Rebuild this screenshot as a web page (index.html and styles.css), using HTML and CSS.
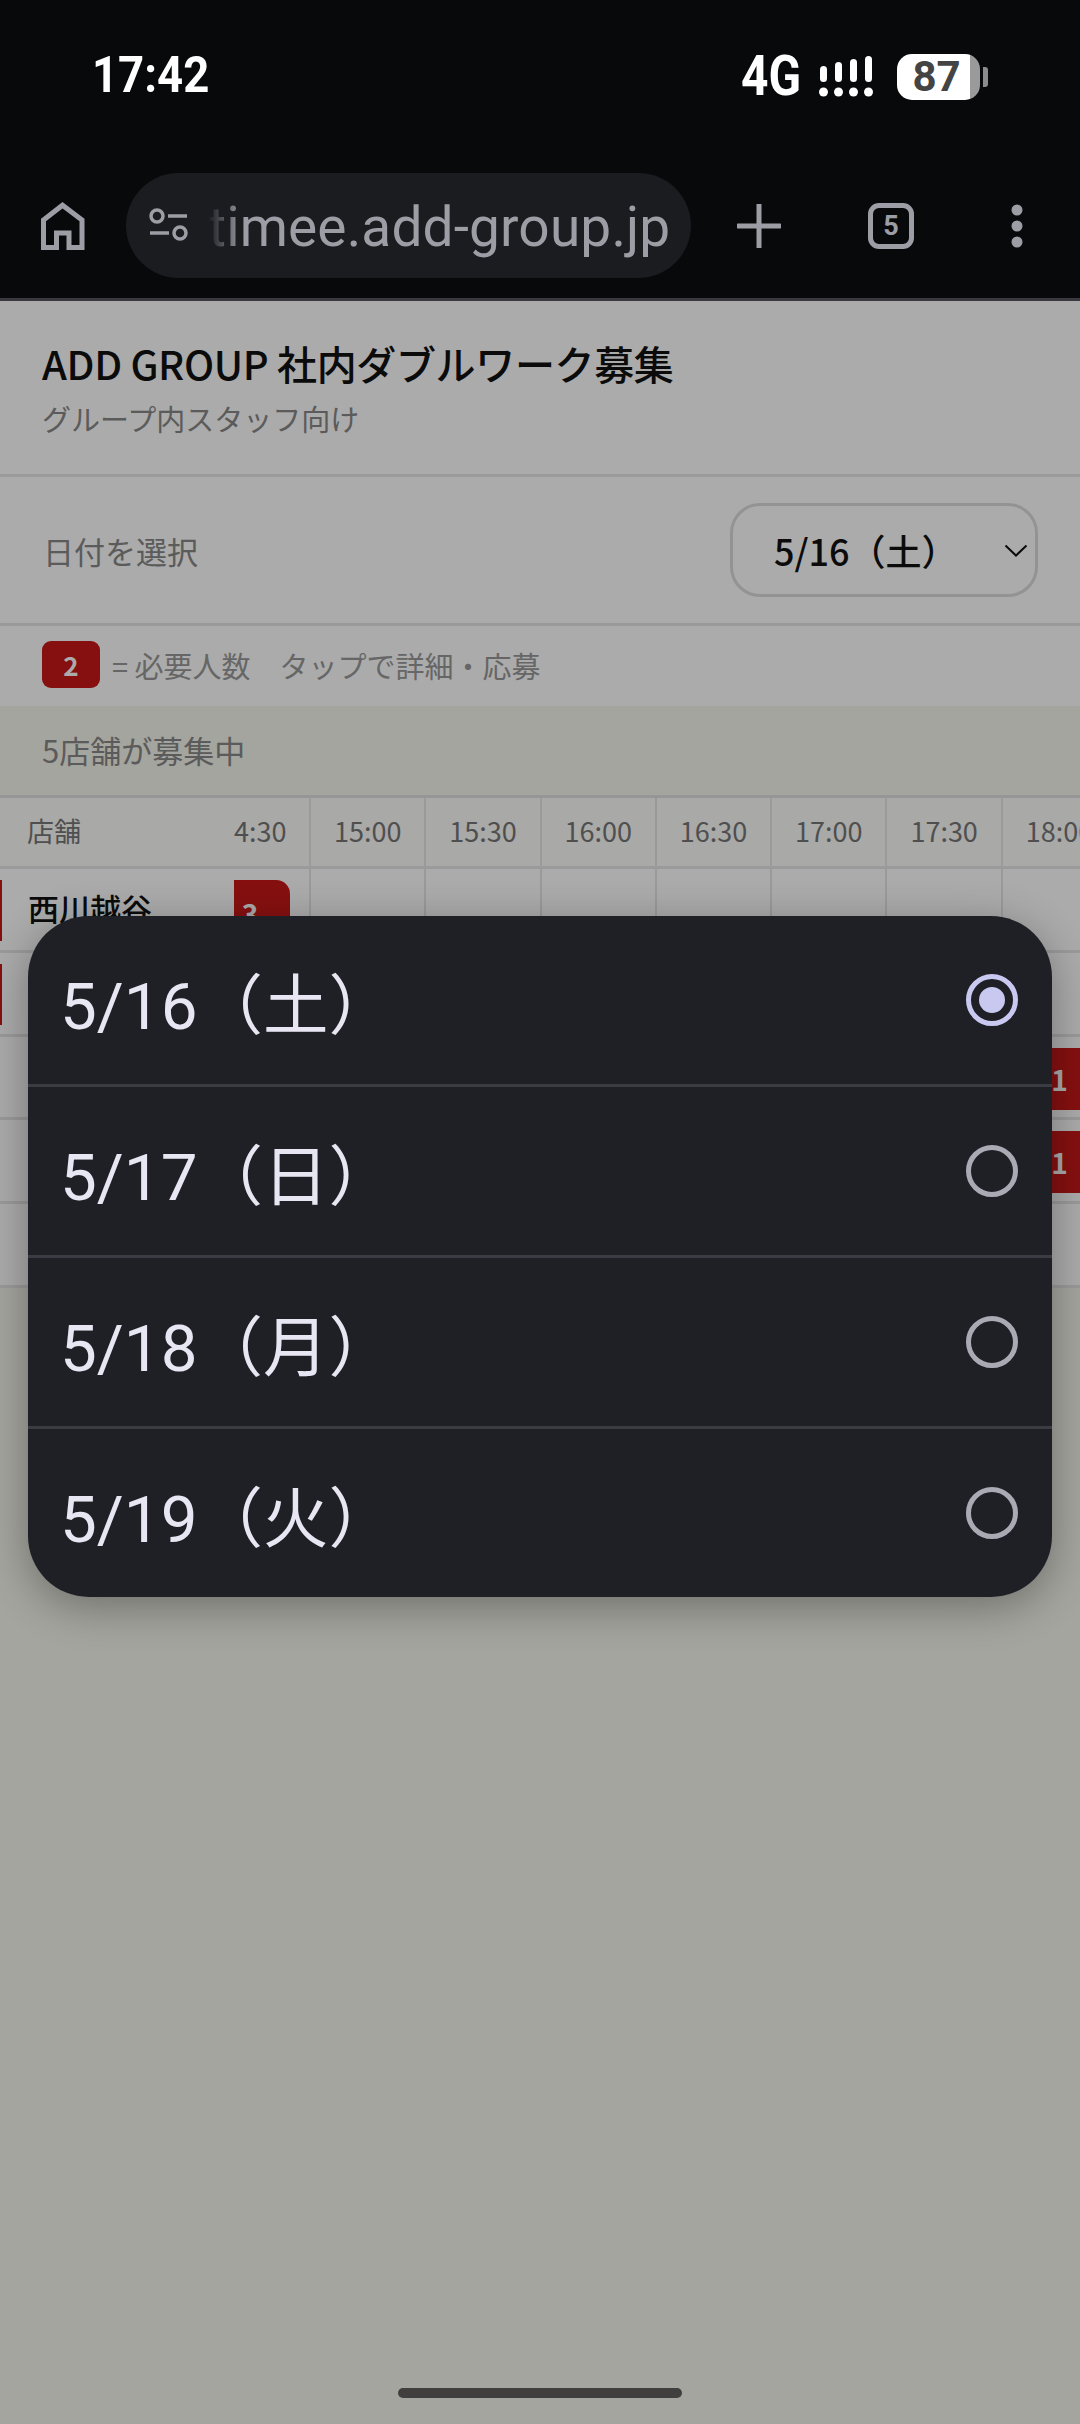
FILE: index.html
```html
<!DOCTYPE html>
<html lang="ja">
<head>
    <meta charset="UTF-8">
    <meta name="viewport" content="width=device-width, initial-scale=1.0">
    <title>ADD GROUP 社内ダブルワーク募集</title>
    <link rel="stylesheet" href="styles.css">
</head>
<body>
    <div class="chrome">
        <div class="status">
            <span class="time">17:42</span>
            <div class="status-right">
                <span class="net">4G</span>
                <svg class="signal" width="60" height="46" viewBox="0 0 60 46">
                    <g fill="#fff">
                        <rect x="2" y="11" width="7" height="16" rx="3.5"/>
                        <rect x="17" y="7" width="7" height="20" rx="3.5"/>
                        <rect x="32" y="4" width="7" height="23" rx="3.5"/>
                        <rect x="47" y="1" width="7" height="26" rx="3.5"/>
                        <circle cx="5.5" cy="37" r="4.5"/>
                        <circle cx="20.5" cy="37" r="4.5"/>
                        <circle cx="35.5" cy="37" r="4.5"/>
                        <circle cx="50.5" cy="37" r="4.5"/>
                    </g>
                </svg>
                <div class="battery"><span class="battery-level">87</span></div>
                <div class="battery-nub"></div>
            </div>
        </div>
        <div class="toolbar">
            <svg class="home-icon" width="44" height="48" viewBox="0 0 44 48">
                <path d="M2.5 45.5V18L21.500 3.200L41 18V45.500H28V31H15.500V45.500Z" fill="none" stroke="#9d9da5" stroke-width="5"/>
            </svg>
            <div class="url-bar">
                <svg class="tune-icon" width="42" height="36" viewBox="0 0 42 36">
                    <g fill="none" stroke="#9d9da5" stroke-width="3.500">
                        <circle cx="8" cy="8" r="6"/>
                        <circle cx="31" cy="25" r="6"/>
                        <path d="M19 8H38M1 25H20"/>
                    </g>
                </svg>
                <span class="url-text">timee.add-group.jp</span>
            </div>
            <svg class="plus-icon" width="44" height="44" viewBox="0 0 44 44">
                <path d="M22 1V43M1 22H43" stroke="#9d9da5" stroke-width="5" stroke-linecap="round"/>
            </svg>
            <div class="tab-count">5</div>
            <svg class="menu-icon" width="12" height="44" viewBox="0 0 12 44">
                <g fill="#9d9da5">
                    <circle cx="6" cy="6" r="5.500"/>
                    <circle cx="6" cy="22" r="5.500"/>
                    <circle cx="6" cy="38" r="5.500"/>
                </g>
            </svg>
        </div>
    </div>

    <div class="page">
        <div class="page-head">
            <h1>ADD GROUP 社内ダブルワーク募集</h1>
            <p>グループ内スタッフ向け</p>
        </div>
        <div class="date-row">
            <span class="date-label">日付を選択</span>
            <div class="date-select">
                <span>5/16（土）</span>
                <svg width="24" height="13" viewBox="0 0 24 13">
                    <path d="M1.500 1.500L12 11.500L22.500 1.500" fill="none" stroke="#111" stroke-width="2"/>
                </svg>
            </div>
        </div>
        <div class="legend">
            <span class="legend-badge">2</span>
            <span>= 必要人数　タップで詳細・応募</span>
        </div>
        <div class="count-row">5店舗が募集中</div>

        <div class="table">
            <div class="row head">
                <div class="store">店舗</div>
                <div class="cell first">4:30</div>
                <div class="cell">15:00</div>
                <div class="cell">15:30</div>
                <div class="cell">16:00</div>
                <div class="cell">16:30</div>
                <div class="cell">17:00</div>
                <div class="cell">17:30</div>
                <div class="cell">18:00</div>
            </div>
            <div class="row">
                <div class="store"><div class="store-name">西川越谷</div></div>
                <div class="cell first"><div class="slot slot-start">3</div></div>
                <div class="cell"></div><div class="cell"></div><div class="cell"></div>
                <div class="cell"></div><div class="cell"></div><div class="cell"></div>
                <div class="cell"></div>
            </div>
            <div class="row">
                <div class="store"><div class="store-name"></div></div>
                <div class="cell first"></div>
                <div class="cell"></div><div class="cell"></div><div class="cell"></div>
                <div class="cell"></div><div class="cell"></div><div class="cell"></div>
                <div class="cell"></div>
            </div>
            <div class="row">
                <div class="store"></div>
                <div class="cell first"></div>
                <div class="cell"></div><div class="cell"></div><div class="cell"></div>
                <div class="cell"></div><div class="cell"></div><div class="cell"></div>
                <div class="cell"><div class="slot">1</div></div>
            </div>
            <div class="row">
                <div class="store"></div>
                <div class="cell first"></div>
                <div class="cell"></div><div class="cell"></div><div class="cell"></div>
                <div class="cell"></div><div class="cell"></div><div class="cell"></div>
                <div class="cell"><div class="slot">1</div></div>
            </div>
            <div class="row">
                <div class="store"></div>
                <div class="cell first"></div>
                <div class="cell"></div><div class="cell"></div><div class="cell"></div>
                <div class="cell"></div><div class="cell"></div><div class="cell"></div>
                <div class="cell"></div>
            </div>
        </div>

        <div class="scrim"></div>

        <div class="sheet">
            <div class="option">
                <span>5/16（土）</span>
                <span class="radio selected"></span>
            </div>
            <div class="option">
                <span>5/17（日）</span>
                <span class="radio"></span>
            </div>
            <div class="option">
                <span>5/18（月）</span>
                <span class="radio"></span>
            </div>
            <div class="option">
                <span>5/19（火）</span>
                <span class="radio"></span>
            </div>
        </div>

        <div class="home-bar"></div>
    </div>
</body>
</html>
```

FILE: styles.css
```css
* { box-sizing: border-box; }
html, body {
    margin: 0;
    padding: 0;
    width: 1080px;
    height: 2424px;
    overflow: hidden;
}
body {
    display: flex;
    flex-direction: column;
    font-family: "Noto Sans CJK JP", "Noto Sans", sans-serif;
    background-color: #f6f6ed;
}

/* browser chrome */
.chrome {
    height: 301px;
    flex-shrink: 0;
    background-color: #08090b;
    border-bottom: 3px solid #38383e;
    font-family: Roboto, sans-serif;
}
.status {
    height: 173px;
    padding: 46px 92px 0 92px;
    display: flex;
    justify-content: space-between;
    align-items: flex-start;
    color: #fff;
}
.time {
    font-size: 50px;
    font-weight: 700;
    line-height: 58px;
    transform: scaleX(0.91);
    transform-origin: left center;
}
.status-right {
    display: flex;
    align-items: center;
    height: 60px;
}
.net {
    font-size: 55px;
    font-weight: 700;
    line-height: 60px;
    width: 77px;
    transform: scaleX(0.87);
    transform-origin: left center;
}
.signal { margin-top: 3px; width: 60px; }
.battery {
    width: 83px;
    height: 46px;
    margin-left: 19px;
    margin-top: 2px;
    border-radius: 15px;
    background: linear-gradient(to right, #fff 73px, #9a9a9a 73px);
    color: #444;
    font-weight: 700;
    font-size: 42px;
    line-height: 46px;
}
.battery-level { display: block; width: 79px; text-align: center; }
.battery-nub {
    width: 5px;
    height: 20px;
    margin-left: 3px;
    margin-top: 2px;
    background-color: #8c8c8c;
    border-radius: 0 3px 3px 0;
}
.toolbar {
    height: 105px;
    display: flex;
    align-items: center;
    position: relative;
}
.home-icon { margin-left: 41px; flex-shrink: 0; }
.url-bar {
    width: 565px;
    height: 105px;
    margin-left: 41px;
    padding-left: 23px;
    border-radius: 53px;
    background-color: #1b1c20;
    display: flex;
    align-items: center;
    overflow: hidden;
}
.tune-icon { flex-shrink: 0; }
.url-text {
    margin-left: 17px;
    margin-top: 2px;
    font-size: 55px;
    letter-spacing: 0.15px;
    color: #9d9da5;
    white-space: nowrap;
    -webkit-mask-image: linear-gradient(to right, transparent 0, #000 34px);
    mask-image: linear-gradient(to right, transparent 0, #000 34px);
}
.plus-icon { margin-left: 46px; flex-shrink: 0; }
.tab-count {
    width: 46px;
    height: 46px;
    margin-left: 87px;
    border: 5px solid #9d9da5;
    border-radius: 11px;
    color: #9d9da5;
    font-size: 27px;
    font-weight: 700;
    line-height: 36px;
    text-align: center;
    flex-shrink: 0;
}
.menu-icon { margin-left: 97px; flex-shrink: 0; }

/* page behind the dialog */
.page {
    flex: 1;
    position: relative;
    overflow: hidden;
}
.page-head {
    height: 176px;
    padding: 32px 42px 0;
    background-color: #fff;
    border-bottom: 3px solid #e6e6e6;
}
.page-head h1 {
    margin: 0;
    font-size: 40px;
    font-weight: 500;
    line-height: 60px;
    letter-spacing: -0.35px;
    color: #111;
}
.page-head p {
    margin: 5px 0 0;
    font-size: 29px;
    line-height: 40px;
    color: #888;
}
.date-row {
    height: 149px;
    padding: 0 42px 0 43px;
    background-color: #fff;
    border-bottom: 3px solid #e6e6e6;
    display: flex;
    justify-content: space-between;
    align-items: center;
}
.date-label { font-size: 31px; color: #888; }
.date-select {
    width: 308px;
    height: 94px;
    padding: 0 7px 0 41px;
    border: 3px solid #dcdcdc;
    border-radius: 30px;
    display: flex;
    justify-content: space-between;
    align-items: center;
    font-size: 36px;
    font-weight: 500;
    color: #111;
}
.legend {
    height: 80px;
    padding: 0 42px 3px;
    background-color: #fff;
    display: flex;
    align-items: center;
    gap: 12px;
    font-size: 29px;
    color: #999;
}
.legend-badge {
    width: 58px;
    height: 47px;
    border-radius: 9px;
    background-color: #c81818;
    color: #fff;
    font-size: 26px;
    font-weight: 700;
    line-height: 47px;
    text-align: center;
}
.count-row {
    height: 89px;
    padding: 0 42px 2px;
    display: flex;
    align-items: center;
    font-size: 31px;
    color: #888;
}

.table {
    border-top: 3px solid #e0e0e0;
    background-color: #fff;
}
.row {
    display: grid;
    grid-template-columns: 235px 76px repeat(7, 115.300px);
    height: 83.800px;
    border-bottom: 3px solid #e6e6e6;
    white-space: nowrap;
    overflow: hidden;
}
.row.head {
    height: 71px;
    background-color: #fcfcf9;
    font-size: 27px;
    color: #777;
}
.row.head .store { padding-left: 27px; line-height: 66px; }
.row.head .cell {
    padding: 0;
    line-height: 66px;
    text-align: center;
}
.row.head .cell.first { padding-right: 0; text-align: left; text-indent: -1px; }
.cell {
    border-right: 2px solid #e6e6e6;
    padding: 11px 5px 9px;
}
.cell.first { padding: 11px 19px 9px 0; }
.store-name {
    height: 61px;
    margin-top: 11px;
    padding-left: 26px;
    border-left: 2px solid #c81818;
    font-size: 31px;
    font-weight: 500;
    line-height: 56px;
    color: #111;
}
.slot {
    height: 100%;
    background-color: #c81818;
    color: #fff;
    font-size: 28px;
    font-weight: 700;
    line-height: 62px;
    text-align: center;
}
.slot-start {
    margin-left: -1px;
    border-radius: 0 14px 14px 0;
    padding-right: 24px;
    line-height: 66px;
}

.scrim {
    position: absolute;
    inset: 0;
    background-color: rgba(0, 0, 0, 0.33);
}

/* date picker dialog */
.sheet {
    position: absolute;
    left: 28px;
    top: 615px;
    width: 1024px;
    height: 681px;
    border-radius: 61px;
    background-color: #1f2026;
    box-shadow: 0 10px 44px rgba(0, 0, 0, 0.32);
    font-family: Roboto, "Noto Sans CJK JP", sans-serif;
    color: #e8e6f2;
    overflow: hidden;
}
.option {
    height: 171px;
    padding: 0 34px 0 32px;
    border-bottom: 3px solid #3b3b43;
    display: flex;
    justify-content: space-between;
    align-items: center;
    font-size: 65.500px;
}
.option:last-child { border-bottom: none; height: 168px; }
.radio {
    width: 52px;
    height: 52px;
    border: 5.500px solid #aaaab4;
    border-radius: 50%;
    display: flex;
    justify-content: center;
    align-items: center;
}
.radio.selected { border-color: #c8c8f0; }
.radio.selected::after {
    content: "";
    width: 26px;
    height: 26px;
    border-radius: 50%;
    background-color: #c8c8f0;
}

.home-bar {
    position: absolute;
    left: 398px;
    bottom: 26px;
    width: 284px;
    height: 10px;
    border-radius: 5px;
    background-color: #403f3d;
}
```
